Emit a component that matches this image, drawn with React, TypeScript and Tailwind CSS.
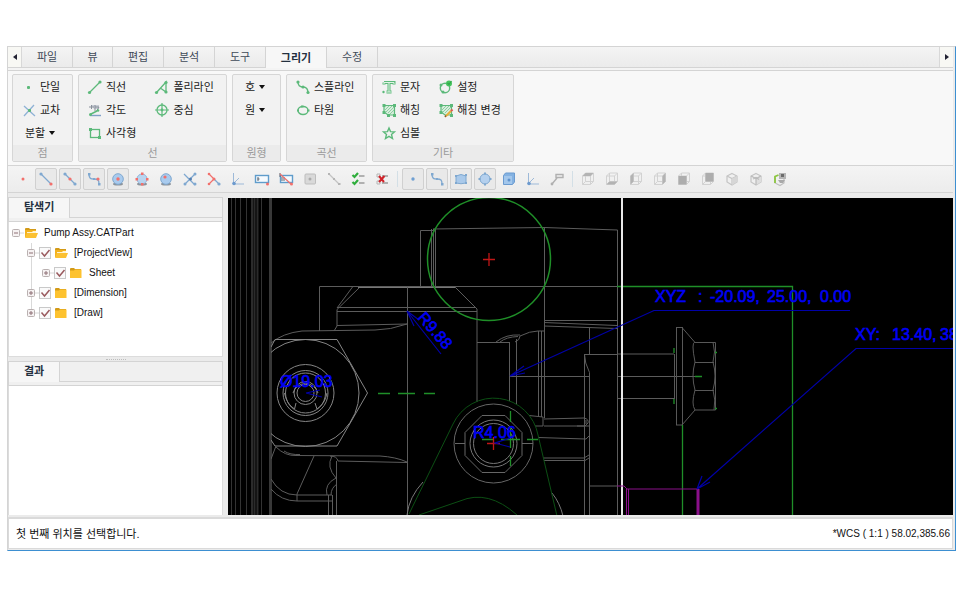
import { useState } from "react";
import type { ReactNode } from "react";

const G = "#5cb97a";
const B = "#7fa8d0";
const R = "#f2706c";

// 16x16 icons
const icons: Record<string, ReactNode> = {
  point: <rect x="6" y="7" width="3" height="3" rx="1" fill={G} />,
  cross: (
    <>
      <path d="M3 4l11 10M13 3L3 14" stroke="#8fb2d6" strokeWidth="1.3" />
      <rect x="7" y="7" width="3" height="3" rx="1" fill={G} />
    </>
  ),
  line: (
    <>
      <path d="M3 13L13 3" stroke={G} strokeWidth="1.3" />
      <circle cx="2.500" cy="13.500" r="1.6" fill={G} />
      <circle cx="13" cy="3" r="1.6" fill={G} />
    </>
  ),
  angle: (
    <>
      <path d="M4 3h8v4H7z" fill="#c9ced6" />
      <path d="M2 5h5M4.500 3v4M8 3v6M8 5h4l-3 5" stroke="#8a919c" />
      <path d="M3 13.500h11" stroke="#7fa0c8" strokeWidth="1.4" />
      <path d="M4 12l6-3" stroke={G} strokeWidth="1.4" />
      <circle cx="3.500" cy="12.500" r="1.5" fill={G} />
      <circle cx="11" cy="8.500" r="1.3" fill={G} />
    </>
  ),
  rect: (
    <>
      <rect x="3.5" y="4.5" width="9" height="8" stroke={G} strokeWidth="1.3" />
      <path d="M2 3h3v3H2zM11 11h3v3h-3z" fill={G} />
    </>
  ),
  polyline: (
    <>
      <path d="M3 13L12 3v10L7 9.500" stroke={G} strokeWidth="1.3" />
      <circle cx="2.500" cy="13.500" r="1.6" fill={G} />
      <circle cx="12" cy="3.5" r="1.6" fill={G} />
      <circle cx="12" cy="13" r="1.6" fill={G} />
    </>
  ),
  center: (
    <>
      <circle cx="8" cy="8" r="5" stroke={G} strokeWidth="1.3" />
      <path d="M8 1v14M1 8h14" stroke={G} strokeWidth="1.2" />
      <circle cx="8" cy="8" r="1.4" fill={G} />
    </>
  ),
  spline: (
    <>
      <path d="M3 3c0 4 2 5 5 5s5 1 5 6" stroke={G} strokeWidth="1.4" />
      <circle cx="3" cy="3" r="1.6" fill={G} />
      <circle cx="8" cy="8" r="1.6" fill={G} />
      <circle cx="13" cy="13.500" r="1.6" fill={G} />
    </>
  ),
  ellipse: (
    <>
      <ellipse cx="8" cy="8.5" rx="5" ry="4" stroke={G} strokeWidth="1.4" />
      <path d="M2 7.500h2v2H2zM12 7.500h2.500v2H12zM6 3.500h2.500v2H6z" fill={G} />
    </>
  ),
  text: (
    <>
      <path d="M3 3.500h10v2M3 3.500v2M5.500 13h5M8 3v10" stroke={G} strokeWidth="3" />
      <path d="M3 3.500h10v1.500M3 3.500V5M8 3v10M5.500 13h5" stroke="#dff3e4" strokeWidth="1" />
      <circle cx="2.5" cy="13" r="1.2" fill={G} />
    </>
  ),
  setting: (
    <>
      <circle cx="7" cy="9" r="4.7" stroke={G} strokeWidth="1.4" />
      <circle cx="3" cy="6" r="1.5" fill={G} />
      <circle cx="5" cy="13" r="1.5" fill={G} />
      <circle cx="11" cy="4.5" r="3" fill="#46c45e" />
      <path d="M9.500 4l1.500 1.500L13.500 2" stroke="#2fa548" strokeWidth="1.1" />
    </>
  ),
  hatch: (
    <>
      <path d="M3 3.500h10.500V13H7L3 10z" fill="#d8eedd" stroke={G} strokeWidth="1.2" />
      <path d="M4 8l4-4M5 10l6-6M7 11l6-6M9 12l4-4" stroke={G} strokeWidth=".6" />
      <path d="M1.500 2h3v3h-3zM12 2h3v3h-3zM12 12h3v3h-3zM1.500 9h3v3h-3zM6 12h3v3H6z" fill={G} />
    </>
  ),
  hatchEdit: (
    <>
      <path d="M3 3.500h10.500V13H7L3 10z" fill="#d8eedd" stroke={G} strokeWidth="1.2" />
      <path d="M4 8l4-4M5 10l6-6M7 11l6-6" stroke={G} strokeWidth=".6" />
      <path d="M1.500 2h3v3h-3zM12 2h3v3h-3zM12 12h3v3h-3zM1.500 9h3v3h-3z" fill={G} />
      <path d="M8 14l5-5" stroke="#e8b03c" strokeWidth="2.2" />
      <path d="M13 9l1.500-1.500" stroke="#e2574c" strokeWidth="2.2" />
      <path d="M7 15l1-1.500" stroke="#8b5a2b" strokeWidth="1.5" />
    </>
  ),
  star: (
    <path d="M8 3l1.500 3.600 4 .3-3 2.600 1 4L8 11.400l-3.500 2.100 1-4-3-2.600 4-.3z" stroke={G} strokeWidth="1.4" />
  ),
  sPoint: <circle cx="9" cy="8" r="1.5" fill={R} />,
  sEnd: (
    <>
      <path d="M3 3l10 10" stroke={B} strokeWidth="1.3" />
      <circle cx="3" cy="3" r="1.6" fill={B} />
      <circle cx="13" cy="13" r="1.6" fill={R} />
    </>
  ),
  sMid: (
    <>
      <path d="M3 3l10 10" stroke={B} strokeWidth="1.3" />
      <circle cx="3" cy="3" r="1.6" fill={B} />
      <circle cx="13" cy="13" r="1.6" fill={B} />
      <circle cx="8" cy="8" r="1.6" fill={R} />
    </>
  ),
  sCurve: (
    <>
      <path d="M3 3c0 5 2 5 5 5 4 0 5 1 5 5" stroke={B} strokeWidth="1.3" />
      <path d="M2 2h2.500v2.500H2zM12 12h2.500v2.500H12zM7 7h2v2H7z" fill={B} />
      <circle cx="12" cy="8" r="1.6" fill={R} />
    </>
  ),
  sCenter: (
    <>
      <ellipse cx="8" cy="13" rx="5" ry="1.500" fill="#8d949c" />
      <circle cx="8" cy="8" r="5.300" fill="#a9cbee" stroke={B} />
      <circle cx="8" cy="8" r="1.7" fill={R} />
    </>
  ),
  sQuad: (
    <>
      <ellipse cx="8" cy="13" rx="5" ry="1.500" fill="#8d949c" />
      <circle cx="8" cy="8" r="5" fill="#b9d4ef" stroke="#93b6da" />
      <path d="M7 1.500h2.500V4H7zM7 12h2.500v2.500H7zM1.500 7H4v2.500H1.500zM12 7h2.500v2.500H12z" fill={R} />
    </>
  ),
  sOn: (
    <>
      <ellipse cx="8" cy="13" rx="5" ry="1.500" fill="#8d949c" />
      <circle cx="8" cy="8" r="5.300" fill="#a9cbee" stroke={B} />
      <circle cx="7" cy="6" r="1.6" fill={R} />
    </>
  ),
  sCross: (
    <>
      <path d="M2 3l11 11M13 3L3 13" stroke={B} strokeWidth="1.3" />
      <circle cx="13" cy="3" r="1.5" fill={B} />
      <circle cx="13" cy="13" r="1.5" fill={B} />
      <circle cx="3" cy="13" r="1.5" fill={B} />
      <circle cx="8.500" cy="8" r="1.5" fill="#557fb0" />
    </>
  ),
  sPerp: (
    <>
      <path d="M8 8l5 5" stroke={B} strokeWidth="1.3" />
      <path d="M8 8l-5 5M3 3l5 5" stroke={R} strokeWidth="1.2" />
      <circle cx="3" cy="3" r="1.300" fill={R} />
      <circle cx="3" cy="13" r="1.300" fill={R} />
      <circle cx="8" cy="8" r="1.500" fill={R} />
      <circle cx="13" cy="13" r="1.6" fill={B} />
    </>
  ),
  axis: (
    <>
      <path d="M3.500 2v11H14M4 12l5-5" stroke="#9db9d8" />
      <circle cx="4" cy="12.500" r="1.800" fill="#6c9ace" />
    </>
  ),
  box: (
    <>
      <rect x="1.500" y="4.500" width="13" height="7" fill="#f5fafe" stroke="#5f9ccb" strokeWidth="1.400" />
      <path d="M4 6v4M3.500 8h2" stroke="#59636e" />
      <circle cx="13.500" cy="13" r="1.500" fill={R} />
    </>
  ),
  boxOff: (
    <>
      <rect x="2.500" y="4.500" width="12" height="7" fill="#f5fafe" stroke="#5f9ccb" strokeWidth="1.400" />
      <path d="M4 6v4M6 6v4M2 2v4" stroke="#59636e" />
      <path d="M2 3l11 10" stroke={R} strokeWidth="1.200" />
      <circle cx="13.500" cy="13" r="1.500" fill={R} />
    </>
  ),
  grayBox: (
    <>
      <rect x="3" y="3" width="10.500" height="10" rx="1" fill="#d9d9d9" stroke="#bdbdbd" />
      <circle cx="8" cy="8" r="1.500" fill="#aaa" />
    </>
  ),
  grayLine: (
    <>
      <path d="M3 3l10 10" stroke="#c3c3c3" strokeWidth="1.200" />
      <path d="M2 2h2v2H2zM7 7h2v2H7zM12 12h2.500v2H12z" fill="#b5b5b5" />
    </>
  ),
  checks: (
    <>
      <path d="M2.500 4l2 2L8 2M2.500 11l2 2L8 9" stroke="#2fae3c" strokeWidth="2.200" />
      <path d="M9 5h5.500M9 12h5.500" stroke="#9c9c9c" strokeWidth="1.500" />
    </>
  ),
  clear: (
    <>
      <path d="M3 3h3v3H3zM3 10h3v3H3z" stroke="#b5b5b5" />
      <path d="M8 5h6M8 12h6" stroke="#9c9c9c" strokeWidth="1.500" />
      <path d="M5 5l5 6M10.500 5L5 11" stroke="#d1232a" strokeWidth="2" />
    </>
  ),
  bPoint: <circle cx="8" cy="8" r="1.700" fill="#6f9fd2" />,
  bCurve: (
    <>
      <path d="M3 3c0 5 2 5 5 5 4 0 5 1 5 5" stroke={B} strokeWidth="1.300" />
      <path d="M2 2h2.500v2.500H2zM12 12h2.500v2.500H12zM7 7h2v2H7z" fill={B} />
    </>
  ),
  bFace: (
    <>
      <path d="M3 5q5-3 10 0v7q-5 1.500-10 0z" fill="#a9c9ea" stroke={B} />
      <path d="M2 4h2v2H2zM12 3h2v2h-2zM2 11h2v2H2zM12 11h2v2h-2z" fill={B} />
    </>
  ),
  bCircle: (
    <>
      <circle cx="8" cy="8" r="5" fill="#b4d0ee" stroke={B} />
      <path d="M7 1.500h2v2H7zM7 12.500h2v2H7zM1.500 7h2v2h-2zM12.500 7h2v2h-2z" fill={B} />
    </>
  ),
  bSolid: (
    <>
      <path d="M2.500 4.500l2-2.500h9v9l-2 2.500h-9z" fill="#84b2e2" stroke="#6b9bd0" />
      <path d="M3 5h8v8H3z" fill="#a3c7ec" />
      <circle cx="8" cy="9" r="1.500" fill="#5f93cd" />
    </>
  ),
  tag: (
    <>
      <path d="M7 3.500h7v3H7zM8 7l-5 6" stroke="#b0b0b0" strokeWidth="1.400" />
      <circle cx="3" cy="13" r="1.400" fill="#b0b0b0" />
    </>
  ),
  cubeTop: <Cube><path d="M2.500 5l3-3h8l-3 3z" fill="#b3b3b3" /></Cube>,
  cubeBottom: <Cube><path d="M2.500 13.500l3-3h8l-3 3z" fill="#b3b3b3" /></Cube>,
  cubeLeft: <Cube><path d="M2.500 5l3-3v8.500l-3 3z" fill="#b3b3b3" /></Cube>,
  cubeRight: <Cube><path d="M10.500 5l3-3v8.500l-3 3z" fill="#b3b3b3" /></Cube>,
  cubeFront: <Cube><path d="M2.500 5h8v8.500h-8z" fill="#adadad" /></Cube>,
  cubeBack: <Cube><path d="M5.500 2h8v8.500h-8z" fill="#adadad" /></Cube>,
  iso: (
    <>
      <path d="M8 2.500l5 2.500v6l-5 3-5-3V5z" fill="#f0f0f0" stroke="#c4c4c4" strokeWidth="1.200" />
      <path d="M3 5l5 2.500L13 5M8 7.500V14" stroke="#c4c4c4" strokeWidth="1.200" />
      <path d="M8 7.500L13 5v6l-5 3z" fill="#d6d6d6" />
    </>
  ),
  isoBack: (
    <>
      <path d="M8 2.500l5 2.500v6l-5 3-5-3V5z" fill="#efefef" stroke="#c4c4c4" strokeWidth="1.200" />
      <path d="M8 7.500L13 5v6l-5 3z" fill="#dedede" />
      <path d="M3 5l5 2.500L13 5M8 7.500V14M5 8l3-1.500 3 2" stroke="#bababa" strokeWidth="1.200" />
    </>
  ),
  view: (
    <>
      <path d="M3 6v6l5 2.500 4-2.500V8" stroke="#bfbfbf" strokeWidth="1.200" />
      <path d="M3 12V5.500L6.500 4" stroke="#8cc63f" strokeWidth="1.800" />
      <rect x="7" y="2" width="7" height="6" fill="#b5b5b5" />
      <rect x="9" y="3" width="3" height="3" fill="#6c6c6c" />
      <path d="M6 9h7l-2 3H8z" fill="#a9a9a9" />
    </>
  ),
};

function Cube({ children }: { children: ReactNode }) {
  return (
    <>
      <path d="M2.500 5l3-3h8v8.500l-3 3h-8zM2.500 5h8v8.500M10.500 5l3-3M5.500 2v8.500h8M5.500 10.500l-3 3" stroke="#d2d2d2" />
      {children}
    </>
  );
}

function Icon({ name }: { name: string }) {
  return (
    <svg viewBox="0 0 16 16" className="w-4 h-4 shrink-0" fill="none" aria-hidden="true">
      {icons[name]}
    </svg>
  );
}

const tabs = [
  { label: "파일", width: "w-[51px]" },
  { label: "뷰", width: "w-10" },
  { label: "편집", width: "w-[51px]" },
  { label: "분석", width: "w-[51px]" },
  { label: "도구", width: "w-[51px]" },
  { label: "그리기", width: "w-[61px]" },
  { label: "수정", width: "w-[51px]" },
];

type Cmd = { label: string; icon?: string };
const groups: { title: string; width: string; cols: Cmd[][] }[] = [
  {
    title: "점",
    width: "w-[61px]",
    cols: [[{ label: "단일", icon: "point" }, { label: "교차", icon: "cross" }, { label: "분할" }]],
  },
  {
    title: "선",
    width: "w-[149px]",
    cols: [
      [{ label: "직선", icon: "line" }, { label: "각도", icon: "angle" }, { label: "사각형", icon: "rect" }],
      [{ label: "폴리라인", icon: "polyline" }, { label: "중심", icon: "center" }],
    ],
  },
  { title: "원형", width: "w-[49px]", cols: [[{ label: "호" }, { label: "원" }]] },
  {
    title: "곡선",
    width: "w-[81px]",
    cols: [[{ label: "스플라인", icon: "spline" }, { label: "타원", icon: "ellipse" }]],
  },
  {
    title: "기타",
    width: "w-[142px]",
    cols: [
      [{ label: "문자", icon: "text" }, { label: "해칭", icon: "hatch" }, { label: "심볼", icon: "star" }],
      [{ label: "설정", icon: "setting" }, { label: "해칭 변경", icon: "hatchEdit" }],
    ],
  },
];

const tools: { icon: string; on?: boolean }[][] = [
  [
    { icon: "sPoint" },
    { icon: "sEnd", on: true },
    { icon: "sMid", on: true },
    { icon: "sCurve", on: true },
    { icon: "sCenter", on: true },
    { icon: "sQuad" },
    { icon: "sOn" },
    { icon: "sCross" },
    { icon: "sPerp" },
    { icon: "axis" },
    { icon: "box" },
    { icon: "boxOff" },
    { icon: "grayBox" },
    { icon: "grayLine" },
    { icon: "checks" },
    { icon: "clear" },
  ],
  [
    { icon: "bPoint", on: true },
    { icon: "bCurve", on: true },
    { icon: "bFace", on: true },
    { icon: "bCircle", on: true },
    { icon: "bSolid" },
    { icon: "axis" },
    { icon: "tag" },
  ],
  [
    { icon: "cubeTop" },
    { icon: "cubeBottom" },
    { icon: "cubeLeft" },
    { icon: "cubeRight" },
    { icon: "cubeFront" },
    { icon: "cubeBack" },
    { icon: "iso" },
    { icon: "isoBack" },
    { icon: "view" },
  ],
];

function Caret() {
  return (
    <svg viewBox="0 0 6 4" className="w-1.5 h-1" aria-hidden="true">
      <path d="M0 0h6L3 4z" fill="#111" />
    </svg>
  );
}

function TabBar() {
  const [active, setActive] = useState("그리기");
  return (
    <nav className="flex h-[21px] bg-linear-to-b from-[#f4f4f4] to-[#ebebeb] border-b border-[#d4d4d4]">
      <button aria-label="이전" className="w-3.5 shrink-0 flex items-center justify-center bg-[#f8f8f4] border-r border-[#d8d8d8]">
        <svg viewBox="0 0 4 6" className="w-1 h-1.5"><path d="M4 0v6L0 3z" fill="#223" /></svg>
      </button>
      {tabs.map((t) => (
        <button
          key={t.label}
          onClick={() => setActive(t.label)}
          className={
            (t.label === active
              ? "h-[21px] font-bold text-[#24303f] bg-[#f7f7f7] border-r border-[#d4d4d4] "
              : "text-[#3f4a58] border-r border-[#d4d4d4] ") + t.width
          }
        >
          {t.label}
        </button>
      ))}
      <button aria-label="다음" className="w-3.5 ml-auto shrink-0 flex items-center justify-center bg-[#f8f8f4] border-l border-[#d8d8d8]">
        <svg viewBox="0 0 4 6" className="w-1 h-1.5"><path d="M0 0v6l4-3z" fill="#223" /></svg>
      </button>
    </nav>
  );
}

function Ribbon() {
  return (
    <div className="flex gap-[5px] px-1 pt-[3px] pb-[3px] bg-[#f8f8f8] border-t border-b border-[#d4d4d4]">
      {groups.map((g) => (
        <section key={g.title} className={"flex flex-col h-22 rounded-xs border border-[#d6d6d6] bg-[#f2f2f2] " + g.width}>
          <div className="flex flex-1 gap-[18px] pl-2">
            {g.cols.map((col, i) => (
              <div key={i} className="flex flex-col">
                {col.map((c) => (
                  <button key={c.label} className="flex items-center h-[23px] text-[#1c1c1c] whitespace-nowrap" aria-haspopup={c.icon ? undefined : "menu"}>
                    {c.icon ? (
                      <>
                        <Icon name={c.icon} />
                        <span className="pl-[3px]">{c.label}</span>
                      </>
                    ) : (
                      <span className="flex items-center gap-1 pl-1">
                        {c.label}
                        <Caret />
                      </span>
                    )}
                  </button>
                ))}
              </div>
            ))}
          </div>
          <h2 className="h-4 leading-4 text-center text-[#9b9b9b] bg-[#ebebeb]">{g.title}</h2>
        </section>
      ))}
    </div>
  );
}

function Toolbar() {
  return (
    <div className="flex items-center h-[27px] pl-0.5 bg-linear-to-b from-[#f4f4f4] to-[#ececec] border-b border-[#d4d4d4]">
      {tools.map((set, i) => (
        <div key={i} className="flex items-center">
          {i > 0 && <span className="w-px h-4 mx-[3px] bg-[#d3dfe6]" />}
          {set.map((t, j) => (
            <button
              key={j}
              aria-label={t.icon}
              className={
                t.on
                  ? "w-[22px] h-[22px] mx-px flex items-center justify-center rounded-xs border border-[#d0d0d0] bg-[#e9e9e9]"
                  : "w-[22px] h-[22px] mx-px flex items-center justify-center"
              }
            >
              <Icon name={t.icon} />
            </button>
          ))}
        </div>
      ))}
    </div>
  );
}

function PanelHead({ title }: { title: string }) {
  return (
    <div className="h-[25px] shrink-0 bg-[#f0f0f0] border border-[#d4d4d4]">
      <div className="flex h-5">
        <h2 className="px-[15px] leading-[18px] font-bold text-[#24303f] bg-[#f6f6f6] border-r border-[#d4d4d4]">{title}</h2>
        <div className="flex-1 border-b border-[#d4d4d4]" />
      </div>
    </div>
  );
}

function Folder({ open }: { open?: boolean }) {
  return (
    <svg viewBox="0 0 14 12" className="w-3.5 h-3 shrink-0" aria-hidden="true">
      <path d="M1 2q0-1 1-1h3l1 1h6v3H1z" fill="#d39a17" />
      {open ? (
        <>
          <path d="M1 3h11v7H1z" fill="#f2b21f" />
          <path d="M3 5h5l1-1h3v3H3z" fill="#fff3d0" />
          <path d="M3 6h11l-2 5H1z" fill="#fcc132" />
        </>
      ) : (
        <path d="M1 3.500h4l1-1h6.500V11H1z" fill="#fdc22f" />
      )}
    </svg>
  );
}

function Expander({ open }: { open?: boolean }) {
  return (
    <svg viewBox="0 0 12 20" className="w-3 h-5 shrink-0" fill="none" aria-hidden="true">
      <rect x=".5" y="6.500" width="7" height="7" rx="1" fill="#f6f2f2" stroke="#b9b0b0" />
      <path d={open ? "M2 10h4" : "M2 10h4M4 8v4"} stroke="#8d6f74" />
      <path d="M8 10h4" stroke="#d6d6d6" />
    </svg>
  );
}

type Node = { label: string; depth: string; open?: boolean; folder?: boolean; check?: boolean };
const nodes: Node[] = [
  { label: "Pump Assy.CATPart", depth: "pl-[3px]", open: true, folder: true },
  { label: "[ProjectView]", depth: "pl-[18px]", open: true, folder: true, check: true },
  { label: "Sheet", depth: "pl-[33px]", check: true },
  { label: "[Dimension]", depth: "pl-[18px]", check: true },
  { label: "[Draw]", depth: "pl-[18px]", check: true },
];

function Tree() {
  return (
    <ul className="relative py-px text-[10px]">
      {/* guides between levels */}
      <li aria-hidden="true" className="absolute left-[22px] top-[21px] w-px h-[70px] bg-[#d9d9d9]" />
      {nodes.map((n) => (
        <li key={n.label} className={"relative flex items-center h-5 text-[#111] " + n.depth}>
          <Expander open={n.open} />
          {n.check ? (
            <label className="flex items-center">
              <span className="relative flex mr-[3px]">
                <input type="checkbox" defaultChecked className="peer appearance-none w-3 h-3 border border-[#c9c9c9] bg-[#fafafa]" />
                <svg viewBox="0 0 12 12" className="absolute inset-0 w-3 h-3 pointer-events-none opacity-0 peer-checked:opacity-100" fill="none">
                  <path d="M2.500 5.500l3 3.500L10.500 3" stroke="#9a5a5e" strokeWidth="1.500" />
                </svg>
              </span>
              <Folder open={n.folder} />
              <span className="pl-1.5">{n.label}</span>
            </label>
          ) : (
            <>
              <Folder open={n.folder} />
              <span className="pl-1.5">{n.label}</span>
            </>
          )}
        </li>
      ))}
    </ul>
  );
}

function Drawing() {
  return (
    <svg
      viewBox="228 198 725 317"
      preserveAspectRatio="xMinYMin slice"
      className="absolute inset-0 w-full h-full"
      fill="none"
      role="img"
      aria-label="Pump Assy"
    >
      <defs>
        <clipPath id="section">
          <path d="M271 198H960V516H271z" />
        </clipPath>
      </defs>
      {/* section stripes */}
      <path d="M231.500 198v318M235.500 198v318M240.500 198v318M246.500 198v318M261.500 198v318" stroke="#333" />
      <path d="M252 198v318M254.500 198v318M257.500 198v318" stroke="#2b2b2b" strokeWidth="2" />
      <path d="M270.500 198v318" stroke="#383838" strokeWidth="3" />

      {/* housing */}
      <g stroke="#5c5c5c" clipPath="url(#section)">
        <path d="M319.500 331V286.500H617M352.500 287L337 308M360 287L337 309.500V326L334 331M455 287l22 22V402" />
        <path d="M358 287.500H455" stroke="#777" />
        <path d="M337 307.500H475M337 311.500H477M407.500 286V516M337 325.500l70-1.500Q390 330 375 330l-73 1Q283 333 271 343" />
        <path d="M420.500 286V230.500H433M431.500 229v57M433.500 229v57M435.500 229v57M433 229l111-1.500 73.500 2.500V516M544.500 228V418" />
        <path d="M544 320.500h73M544 322.500l73 3M544 326l73 2.500M589.500 328v26M617 354.500h-32.500q0 8 5 18V516M584.500 354V516" />
        <path d="M477 342.500h32M496 342q10-8 24-7M500 342q6-5 18-5.500M515 342q5-2 5-6 10-5 18-5h6M509.500 342v59M516.500 339v65M538.500 331v86M541.500 331v86" />
        <path d="M510 376.500h79M617 376.500h78M617 354h57M617 398.500h57M589 486h28" />
        <path d="M529 415.500l14 1.500v9h-8M544 419l40-1q5 1 4 5l-3 3h-41M538 437.500l48 1.500 3-3M543 458h41l5-3M544 460.500h41l4-2.500M577 426h12M586 420v4" />
      </g>

      {/* hex bolt */}
      <g stroke="#858585" clipPath="url(#section)">
        <path d="M271 347l4-7.500h62L367.500 393 337 446H275l-4-6" />
        <circle cx="305.500" cy="393" r="53.500" />
        <circle cx="305.500" cy="393" r="28.500" />
        <circle cx="305.500" cy="393" r="22.500" />
        <circle cx="305.500" cy="393" r="20" />
        <circle cx="305.500" cy="393" r="11.500" />
        <circle cx="305.500" cy="393" r="8.500" />
        <path d="M293 393a13 13 0 0 1 25 0M296 403l-1.500 6q-8-5-10-16M315 403l2 6q8-5 10-16" />
      </g>
      <g stroke="#5c5c5c" clipPath="url(#section)">
        <path d="M276 446l-5 13M276 447q9 9 20 8.500L380 456q16 1 27 6M284 451q6 4 16 3.500M338 461l69 1.500M314 456l-17 38v7" />
        <path d="M271 479q9 16 26 16h35M271 489q10 12 26 12h35M328.500 495v21M332.500 495v21M336.500 461v55M332 456q-6 11 4 22M330 456q7 0 8 5M336 478q-12 6-9 17M337 484q-6 4-6 11" />
        <path d="M407 515q2-18 16-33M552 493q8 10 11 23" stroke="#777" />
      </g>

      {/* round boss */}
      <g stroke="#666">
        <circle cx="493.500" cy="443.500" r="39.500" />
        <circle cx="493.500" cy="443.500" r="23.500" stroke="#777" />
        <circle cx="493.500" cy="443.500" r="20" stroke="#777" />
        <path d="M482 415.500h23l17 17v23l-17 17h-23l-17-17v-23zM455 443.500h10M522 443.500h11" />
      </g>

      {/* side bolt */}
      <g stroke="#585858">
        <path d="M674.500 354v45M676.500 327V425M682.500 327V425M676 327.500h6L695 342.500h20.500v67.500H695l-13 15h-6M695 362.500h19M695 390.500h19M695 342q-4 0 0 20-4 14 0 28-4 14 0 20M713 342q3 10 0 20 4 14 0 28 3 10 1 20" />
      </g>

      {/* sketch geometry */}
      <g stroke="#0c4f14">
        <path d="M409 514l44-90A45 45 0 0 1 538 435l19 81M419 515l41-14q28-12 57 14" />
      </g>
      <g stroke="#1f8f28" strokeWidth="1.300">
        <circle cx="489" cy="259" r="61.500" strokeWidth="1.500" />
        <path d="M617 286.500H792.500V516M682.500 425v91" />
        <path d="M378 393.500h12M398 393.500h17M424 393.500h11M510.500 411v11M510.500 427v21M510.500 456v10M482 439.500h12M501 439.500h19M527 439.500h11M674 348v5M674 399v5M695 376.500h7M715 352.500h2M715 408.500h2" />
      </g>
      <path d="M622 198v318" stroke="#e8e8e8" strokeWidth="2" />
      <g stroke="#8a108a">
        <path d="M617 486h7l3 3H699M626.500 489v27M628.500 489v27" />
        <path d="M698 489v27" strokeWidth="3" />
      </g>
      <path d="M489 253v13M483 259.500h12M493.500 437v13M487 443.500h13" stroke="#c01616" strokeWidth="1.300" />

      {/* dimensions */}
      <g stroke="#0000a8" strokeWidth="1.200">
        <path d="M850 310.500H654L510 376l14-10M510 376l15-3" />
        <path d="M953 348.500H856L697 489l5-13M697 489l13-7" />
        <path d="M441 354L407 311l7 15M407 311l12 9M510 438l-15 5 15 4M306 393l14-3M306 393l16 4" />
      </g>
      <g fill="#0000f5" stroke="#0000f5" strokeWidth=".6" fontSize="16" fontFamily="'Liberation Sans', Arial, sans-serif">
        <text y="302">
          <tspan x="655">XYZ</tspan>
          <tspan x="698">:</tspan>
          <tspan x="710">-20.09,</tspan>
          <tspan x="767">25.00,</tspan>
          <tspan x="820">0.00</tspan>
        </text>
        <text y="340">
          <tspan x="855">XY:</tspan>
          <tspan x="892">13.40,</tspan>
          <tspan x="940">38</tspan>
        </text>
        <text transform="translate(417 318) rotate(49)">R9.88</text>
        <text x="280" y="387">Ø19.03</text>
        <text x="473" y="438">R4.06</text>
      </g>
    </svg>
  );
}

function App() {
  return (
    <div className="min-h-screen flex flex-col pt-[46px] pb-[49px] pl-[7px] pr-1 bg-white text-[11px] leading-4 font-['Liberation_Sans','Noto_Sans_CJK_KR',sans-serif]">
      <div className="flex-1 flex flex-col border border-t-[#d4d4d4] border-l-[#d4d4d4] border-r-[#3d8fd1] border-b-[#3d8fd1] bg-[#ebebeb]">
        <header className="pr-0.5">
          <TabBar />
          <div className="h-0.5 bg-[#f4f4f4]" />
          <Ribbon />
          <Toolbar />
        </header>

        <main className="flex-1 flex gap-[5px] pt-1 pr-0.5">
          <aside className="w-[215px] shrink-0 flex flex-col">
            <PanelHead title="탐색기" />
            <div className="h-[135px] bg-white border-x border-b border-[#dcdcdc]">
              <Tree />
            </div>
            <div className="h-1 shrink-0 flex items-center justify-center">
              <span className="w-5 border-t border-dotted border-[#bdbdbd]" />
            </div>
            <PanelHead title="결과" />
            <div className="flex-1 bg-white border-x border-[#dcdcdc]" />
          </aside>
          <div className="relative flex-1 mt-px bg-black overflow-hidden">
            <Drawing />
          </div>
        </main>

        <footer className="flex items-center justify-between h-8 mt-0.5 mr-0.5 mb-px pl-[7px] pr-0.5 bg-white border border-t-2 border-[#dadada] text-[#111]">
          <span>첫 번째 위치를 선택합니다.</span>
          <span className="text-[10px]">*WCS ( 1:1 ) 58.02,385.66</span>
        </footer>
      </div>
    </div>
  );
}

export default App;
